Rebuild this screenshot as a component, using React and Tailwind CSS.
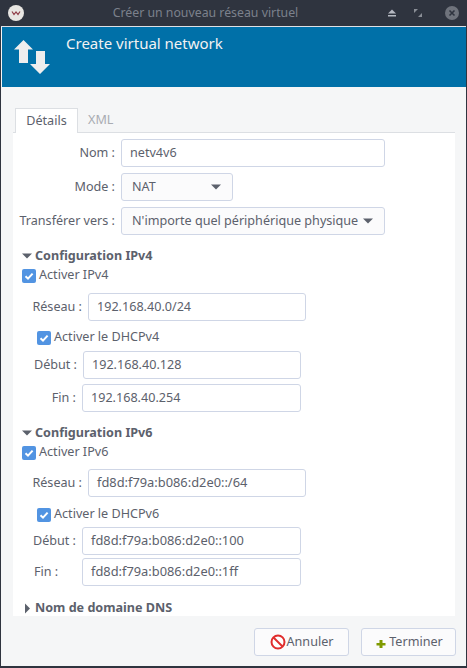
const F = { fontFamily: '"Noto Sans", sans-serif' };

function Input({ value, className = "", wide = false }) {
  return (
    <div className={`h-[28px] flex items-center bg-white border border-[#cfd6e6] rounded-[3px] px-[8px] text-[#5c616c] ${wide ? "text-[12.85px]" : "text-[12.6px]"} ${className}`}>
      {value}
    </div>
  );
}

function Caret({ dir = "down", className = "" }) {
  return (
    <svg width="12" height="12" viewBox="0 0 12 12" className={`shrink-0 ${className}`}>
      {dir === "down" ? <path d="M1 3.5h10L6 8.5z" fill="#5c616c" /> : <path d="M4 1.5v10L9 6.5z" fill="#5c616c" />}
    </svg>
  );
}

function Check({ label, className = "" }) {
  return (
    <div className={`flex items-center gap-[3px] h-[15px] text-[12.6px] text-[#5c616c] ${className}`}>
      <div className="w-[14px] h-[14px] rounded-[2px] bg-[#5294e2] flex items-center justify-center">
        <svg width="12" height="12" viewBox="0 0 12 12">
          <path d="M2.5 6.2 5 8.6 9.6 3.6" fill="none" stroke="#fff" strokeWidth="2" />
        </svg>
      </div>
      <span>{label}</span>
    </div>
  );
}

function Row({ label, labelW, gap = 6, children, className = "", labelCls = "text-right" }) {
  return (
    <div className={`flex items-center ${className}`}>
      <div className={`text-[12.6px] text-[#5c616c] shrink-0 whitespace-nowrap ${labelCls}`} style={{ width: labelW, marginRight: gap }}>{label}</div>
      {children}
    </div>
  );
}

function Section({ title, open = true, className = "" }) {
  return (
    <div className={`flex items-center gap-[2px] h-[16px] text-[12.6px] font-bold text-[#5c616c] ${className}`}>
      <Caret dir={open ? "down" : "right"} />
      <span>{title}</span>
    </div>
  );
}

export default function App() {
  return (
    <div style={F} className="w-[467px] h-[668px] bg-[#2f343f] flex flex-col overflow-hidden">
      <div className="h-[26px] shrink-0 flex items-center relative">
        <div className="ml-[8px] w-[16px] h-[16px] rounded-full bg-[#e8e6e3] flex items-center justify-center">
          <svg width="10" height="6" viewBox="0 0 10 6"><path d="M1 1.5 3 4.5 5 2 7 4.5 9 1.5" fill="none" stroke="#8e3b46" strokeWidth="1.2" /></svg>
        </div>
        <div className="flex-1 text-center text-[12.3px] text-[#7c818c]">Créer un nouveau réseau virtuel</div>
        <div className="flex items-center mr-[8px]">
          <svg width="10" height="10" viewBox="0 0 10 10" className="mr-[17px]"><path d="M5 1.5 9 5.5H1zM1 7h8v1.6H1z" fill="#b5b9c2" /></svg>
          <svg width="8" height="8" viewBox="0 0 8 8" className="mr-[23px]"><path d="M0 0H4L0 4zM8 8H4L8 4z" fill="#8a8e96" /></svg>
          <div className="w-[14px] h-[14px] rounded-full bg-[#6f737c] flex items-center justify-center">
            <svg width="8" height="8" viewBox="0 0 8 8"><path d="M1.500 1.500 6.500 6.500M6.500 1.500 1.500 6.500" stroke="#2f343f" strokeWidth="1.600" /></svg>
          </div>
        </div>
      </div>
      <div className="h-[640px] shrink-0 mx-[1px] border-t border-[#dfe1e5] bg-[#f5f6f7] flex flex-col">
        <div className="h-[60px] shrink-0 ml-[1px] bg-[#0070a8] flex items-start">
          <svg width="36" height="34" viewBox="0 0 36 34" className="ml-[12px] mt-[13px] shrink-0">
            <path d="M0 9.500 9.500 0 19 9.500H14V23H5V9.500z" fill="#eeeeee" />
            <path d="M22 11H31V24H36L26 34 16 24H22z" fill="#eeeeee" />
          </svg>
          <div className="ml-[16px] mt-[5px] text-[15px] leading-[22px] text-[#f2f2f2]">Create virtual network</div>
        </div>
        <div className="flex h-[24px] ml-[14px] mt-[21px] shrink-0 text-[12.6px]">
          <div className="w-[63px] h-[25px] pt-[1px] bg-white border border-b-0 border-[#dcdfe3] flex items-center justify-center text-[#5c616c] relative z-10">Détails</div>
          <div className="ml-[10px] h-[24px] flex items-center text-[#a9acb2]">XML</div>
        </div>
        <div className="ml-[12px] mr-[10px] w-[442px] h-[484px] bg-white border-t border-[#dcdfe3] overflow-hidden shrink-0 pl-[6px]">
          <Row label="Nom :" labelW={96} className="mt-[6px]"><Input value="netv4v6" className="w-[264px]" /></Row>
          <Row label="Mode :" labelW={96} className="mt-[6px]">
            <div className="w-[112px] h-[28px] flex items-center justify-between px-[10px] bg-[#fbfbfc] border border-[#cfd6e6] rounded-[3px] text-[12.6px] text-[#5c616c]">
              <span>NAT</span><Caret />
            </div>
          </Row>
          <Row label="Transférer vers :" labelW={96} className="mt-[6px]">
            <div className="w-[264px] h-[28px] flex items-center justify-between px-[10px] bg-[#fbfbfc] border border-[#cfd6e6] rounded-[3px] text-[12.6px] text-[#5c616c] whitespace-nowrap">
              <span>N'importe quel périphérique physique</span><Caret />
            </div>
          </Row>
          <Section title="Configuration IPv4" className="mt-[13px] ml-[2px]" />
          <Check label="Activer IPv4" className="mt-[4px] ml-[3px]" />
          <Row label="Réseau :" labelW={63} className="mt-[10px]"><Input value="192.168.40.0/24" className="w-[218px]" /></Row>
          <Check label="Activer le DHCPv4" className="mt-[9px] ml-[18px]" />
          <Row label="Début :" labelW={58} className="mt-[6px]"><Input value="192.168.40.128" className="w-[218px]" /></Row>
          <Row label="Fin :" labelW={57} className="mt-[5px]"><Input value="192.168.40.254" className="w-[219px]" /></Row>
          <Section title="Configuration IPv6" className="mt-[13px] ml-[2px]" />
          <Check label="Activer IPv6" className="mt-[4px] ml-[3px]" />
          <Row label="Réseau :" labelW={63} className="mt-[9px]"><Input wide value="fd8d:f79a:b086:d2e0::/64" className="w-[218px]" /></Row>
          <Check label="Activer le DHCPv6" className="mt-[10px] ml-[18px]" />
          <Row label="Début :" labelW={57} className="mt-[5px]"><Input wide value="fd8d:f79a:b086:d2e0::100" className="w-[219px]" /></Row>
          <Row label="Fin :" labelW={42} gap={6} labelCls="ml-[15px] text-left" className="mt-[3px]"><Input wide value="fd8d:f79a:b086:d2e0::1ff" className="w-[219px]" /></Row>
          <Section title="Nom de domaine DNS" open={false} className="mt-[14px] ml-[2px]" />
        </div>
        <div className="flex justify-end gap-[12px] mt-[12px] mr-[10px] text-[12.6px] text-[#5c616c]">
          <div className="w-[95px] h-[28px] flex items-center justify-center gap-[1px] bg-[#fbfbfc] border border-[#cfd6e6] rounded-[3px]">
            <svg width="16" height="16" viewBox="0 0 16 16"><circle cx="8" cy="8" r="6.500" fill="#fff" stroke="#e02d2d" strokeWidth="2" /><path d="M3.500 3.500 12.500 12.500" stroke="#e02d2d" strokeWidth="2" /></svg>
            <span>Annuler</span>
          </div>
          <div className="w-[95px] h-[28px] flex items-center justify-center gap-[1px] bg-[#fbfbfc] border border-[#cfd6e6] rounded-[3px]">
            <svg width="14" height="16" viewBox="0 0 14 16"><path d="M5.500 6h3v3h3v2.500h-3V14h-3v-2.500h-3V9h3z" fill="#7f9a00" /></svg>
            <span>Terminer</span>
          </div>
        </div>
      </div>
    </div>
  );
}
